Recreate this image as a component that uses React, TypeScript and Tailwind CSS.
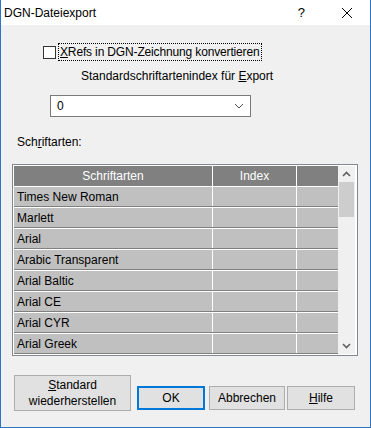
import React from "react";

const fonts = [
  "Times New Roman",
  "Marlett",
  "Arial",
  "Arabic Transparent",
  "Arial Baltic",
  "Arial CE",
  "Arial CYR",
  "Arial Greek",
];

function Chevron({ dir }: { dir: "up" | "down" }) {
  return (
    <svg width="9" height="6" viewBox="0 0 9 6">
      <path
        d={dir === "up" ? "M1 5 L4.5 1.5 L8 5" : "M1 1 L4.5 4.5 L8 1"}
        fill="none"
        stroke="#606060"
        strokeWidth="1.6"
      />
    </svg>
  );
}

function Btn({
  children,
  className = "",
}: {
  children: React.ReactNode;
  className?: string;
}) {
  return (
    <div
      className={`flex items-center justify-center border border-[#adadad] bg-[#e1e1e1] text-center leading-[16px] ${className}`}
    >
      {children}
    </div>
  );
}

export default function App() {
  return (
    <div
      className="flex h-[428px] w-[371px] flex-col border border-t-0 border-[#2b74c9] bg-[#f0f0f0] text-[12px] text-black"
      style={{ fontFamily: '"Liberation Sans", Arial, sans-serif' }}
    >
      {/* title bar */}
      <div className="flex h-[25px] items-center bg-white">
        <span className="pl-[3px]">DGN-Dateiexport</span>
        <span className="ml-auto mr-[36px] text-[13px]">?</span>
        <svg width="12" height="12" viewBox="0 0 12 12" className="mr-[17px]">
          <path d="M1 1 L11 11 M11 1 L1 11" stroke="#000" strokeWidth="1" />
        </svg>
      </div>

      {/* checkbox */}
      <div className="mt-[18px] flex h-[18px] items-center pl-[42px]">
        <div className="h-[13px] w-[13px] border border-[#333] bg-white" />
        <span className="ml-[2px] border border-dotted border-black px-[1px] leading-[16px] tracking-[-0.15px]">
          <span className="underline">X</span>Refs in DGN-Zeichnung konvertieren
        </span>
      </div>

      <div className="mt-[7px] h-[16px] pl-[80px] leading-[16px]">
        Standardschriftartenindex für <span className="underline">E</span>xport
      </div>

      {/* combo */}
      <div className="ml-[49px] mt-[11px] flex h-[22px] w-[201px] items-center border border-[#7a7a7a] bg-white pl-[6px] pr-[6px]">
        <span>0</span>
        <svg width="10" height="6" viewBox="0 0 10 6" className="ml-auto">
          <path d="M1 1 L5 5 L9 1" fill="none" stroke="#555" strokeWidth="1" />
        </svg>
      </div>

      <div className="mt-[17px] h-[16px] pl-[16px] leading-[16px]">
        Sch<span className="underline">r</span>iftarten:
      </div>

      {/* table */}
      <div className="ml-[11px] mt-[14px] flex h-[192px] w-[346px] border border-[#828790] bg-white p-px">
        <div className="flex w-[324px] flex-col overflow-hidden">
          <div className="flex h-[20px] shrink-0 bg-[#808080] text-white">
            <div className="flex w-[198px] items-center justify-center">Schriftarten</div>
            <div className="w-px bg-white" />
            <div className="flex w-[83px] items-center justify-center">Index</div>
            <div className="w-px bg-white" />
            <div className="w-[41px]" />
          </div>
          {fonts.map((f) => (
            <div
              key={f}
              className="flex h-[21px] shrink-0 border-b border-t border-b-[#808080] border-t-white bg-[#c0c0c0]"
            >
              <div className="flex w-[198px] items-center pl-[3px]">{f}</div>
              <div className="w-px bg-white" />
              <div className="w-[83px]" />
              <div className="w-px bg-white" />
              <div className="w-[41px]" />
            </div>
          ))}
        </div>
        <div className="flex w-[17px] flex-col items-center bg-[#f0f0f0]">
          <div className="flex h-[16px] w-full items-center justify-center">
            <Chevron dir="up" />
          </div>
          <div className="h-[35px] w-[15px] bg-[#cdcdcd]" />
          <div className="mt-auto flex h-[16px] w-full items-center justify-center">
            <Chevron dir="down" />
          </div>
        </div>
      </div>

      {/* buttons */}
      <div className="mt-[19px] flex items-start pl-[13px]">
        <Btn className="h-[36px] w-[117px]">
          <span>
            <span className="underline">S</span>tandard
            <br />
            wiederherstellen
          </span>
        </Btn>
        <div className="ml-[6px] mt-[11px] flex h-[24px] w-[68px] items-center justify-center border-2 border-[#0078d7] bg-[#e1e1e1]">
          OK
        </div>
        <Btn className="ml-[4px] mt-[11px] h-[24px] w-[76px]">Abbrechen</Btn>
        <Btn className="ml-[2px] mt-[11px] h-[24px] w-[68px]">
          <span>
            <span className="underline">H</span>ilfe
          </span>
        </Btn>
      </div>
    </div>
  );
}
